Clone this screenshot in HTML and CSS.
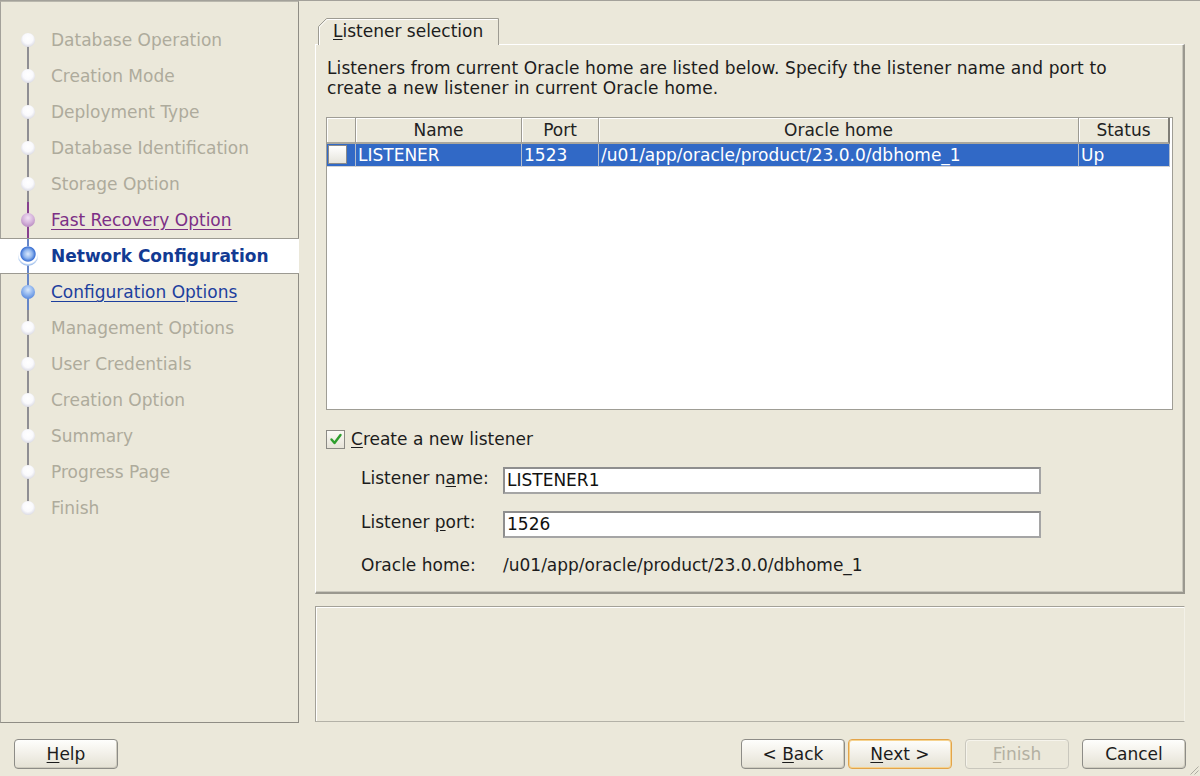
FILE: index.html
```html
<!DOCTYPE html>
<html>
<head>
<meta charset="utf-8">
<title>Network Configuration</title>
<link rel="stylesheet" href="styles.css">
</head>
<body>
<div class="window">
  <div class="main">
    <nav class="sidebar">
      <ul class="steps">
        <li class="step first line-grey disabled"><span class="dot"></span><span class="label">Database Operation</span></li>
        <li class="step line-grey disabled"><span class="dot"></span><span class="label">Creation Mode</span></li>
        <li class="step line-grey disabled"><span class="dot"></span><span class="label">Deployment Type</span></li>
        <li class="step line-grey disabled"><span class="dot"></span><span class="label">Database Identification</span></li>
        <li class="step line-grey disabled"><span class="dot"></span><span class="label">Storage Option</span></li>
        <li class="step line-purple visited"><span class="dot"></span><span class="label">Fast Recovery Option</span></li>
        <li class="step line-blue current"><span class="dot"></span><span class="label">Network Configuration</span></li>
        <li class="step line-blue next"><span class="dot"></span><span class="label">Configuration Options</span></li>
        <li class="step line-grey disabled"><span class="dot"></span><span class="label">Management Options</span></li>
        <li class="step line-grey disabled"><span class="dot"></span><span class="label">User Credentials</span></li>
        <li class="step line-grey disabled"><span class="dot"></span><span class="label">Creation Option</span></li>
        <li class="step line-grey disabled"><span class="dot"></span><span class="label">Summary</span></li>
        <li class="step line-grey disabled"><span class="dot"></span><span class="label">Progress Page</span></li>
        <li class="step last line-grey disabled"><span class="dot"></span><span class="label">Finish</span></li>
      </ul>
    </nav>
    <section class="content">
      <div class="tabs">
        <div class="tab">
          <svg class="tab-frame" width="181" height="27" viewBox="0 0 181 27">
            <path d="M0.5 27 V8.5 L8.5 0.5 H180.5 V27" fill="#ebe8da" stroke="#9d9b92" stroke-width="1"/>
            <path d="M1.5 27 V9 L9 1.5 H179.5" fill="none" stroke="#ffffff" stroke-width="1"/>
          </svg>
          <span class="tab-label"><u>L</u>istener selection</span>
        </div>
      </div>
      <div class="panel">
        <p class="desc">Listeners from current Oracle home are listed below. Specify the listener name and port to create a new listener in current Oracle home.</p>
        <div class="table">
          <div class="thead">
            <div class="th"></div>
            <div class="th">Name</div>
            <div class="th">Port</div>
            <div class="th">Oracle home</div>
            <div class="th th-last">Status</div>
          </div>
          <div class="tr selected">
            <div class="td td-check"><span class="cellbox"></span></div>
            <div class="td">LISTENER</div>
            <div class="td">1523</div>
            <div class="td">/u01/app/oracle/product/23.0.0/dbhome_1</div>
            <div class="td">Up</div>
          </div>
        </div>
        <label class="check-row">
          <span class="checkbox">
            <svg width="16" height="16" viewBox="0 0 16 16"><path d="M3.5 8.5 L6.5 12 L12.5 4" fill="none" stroke="#2e9e2e" stroke-width="2.4" stroke-linecap="round" stroke-linejoin="round"/></svg>
          </span>
          <span><u>C</u>reate a new listener</span>
        </label>
        <div class="form">
          <span class="flabel">Listener n<u>a</u>me:</span>
          <div class="input">LISTENER1</div>
          <span class="flabel">Listener <u>p</u>ort:</span>
          <div class="input">1526</div>
          <span class="flabel flabel-home">Oracle home:</span>
          <span class="fvalue">/u01/app/oracle/product/23.0.0/dbhome_1</span>
        </div>
      </div>
      <div class="messages"></div>
    </section>
  </div>
  <footer class="buttonbar">
    <button class="btn"><u>H</u>elp</button>
    <div class="nav-buttons">
      <button class="btn">&lt; <u>B</u>ack</button>
      <button class="btn btn-default"><u>N</u>ext &gt;</button>
      <button class="btn btn-disabled"><u>F</u>inish</button>
      <button class="btn">Cancel</button>
    </div>
    <svg class="grip" width="12" height="12" viewBox="0 0 12 12">
      <path d="M11.5 3.5 L3.5 11.5 M11.5 7.5 L7.5 11.5" stroke="#aeaca2" stroke-width="1"/>
    </svg>
  </footer>
</div>
</body>
</html>
```
FILE: styles.css
```css
* { box-sizing: border-box; }
html, body { margin: 0; padding: 0; }
body {
  width: 1200px;
  height: 776px;
  overflow: hidden;
  background: #ebe8da;
  font-family: "DejaVu Sans", Verdana, sans-serif;
  font-size: 17px;
  color: #1c1c1c;
}
u { text-decoration: underline; text-underline-offset: 2px; }

.window {
  width: 1200px;
  height: 776px;
  border-top: 1px solid #a3a19a;
  display: flex;
  flex-direction: column;
  position: relative;
}
.main {
  height: 722px;
  display: flex;
}

/* Sidebar */
.sidebar {
  flex: none;
  width: 299px;
  height: 722px;
  border-left: 1px solid #a3a19a;
  border-right: 1px solid #8f8d85;
  border-bottom: 1px solid #8f8d85;
  border-top: 1px solid #b9b7ad;
}
.steps {
  list-style: none;
  margin: 0;
  padding: 20px 0 0 0;
}
.step {
  position: relative;
  height: 36px;
  display: flex;
  align-items: center;
  padding-left: 21px;
  margin-left: -1px;
}
.step::before {
  content: "";
  position: absolute;
  left: 27px;
  width: 2px;
  top: 0;
  bottom: 0;
}
.step.first::before { top: 50%; }
.step.last::before { bottom: 50%; }
.line-grey::before { background: #8f8e93; }
.line-purple::before { background: #87418f; }
.line-blue::before { background: #6686c8; }
.dot {
  position: relative;
  z-index: 1;
  width: 14px;
  height: 14px;
  border-radius: 50%;
  flex: none;
}
.label { margin-left: 16px; white-space: nowrap; }
.disabled .dot {
  background: radial-gradient(circle at 50% 40%, #ffffff 0%, #fafafd 45%, #d8d8e2 80%, #b4b4c2 100%);
}
.disabled .label { color: #aeab9c; }
.visited .dot {
  background: radial-gradient(circle at 50% 35%, #f1e2f3 0%, #d6b4dc 45%, #a674b0 100%);
}
.visited .label { color: #7c2f86; text-decoration: underline; text-underline-offset: 3px; }
.next .dot {
  background: radial-gradient(circle at 50% 35%, #d8e8fc 0%, #8eb4ee 45%, #3a6fd2 100%);
}
.next .label { color: #1d3f9e; text-decoration: underline; text-underline-offset: 3px; }
.current {
  background: #ffffff;
  border-top: 1px solid #9c9a92;
  border-bottom: 1px solid #9c9a92;
  padding-left: 18px;
  margin-right: -1px;
}
.current .dot {
  width: 20px;
  height: 20px;
  background:
    radial-gradient(circle at 50% 40%, #dbe9fc 0%, #8fb5ee 28%, #3f73d4 46%, #ffffff 52%, #ffffff 60%, #a6c4ee 70%, #7fa6e2 100%);
}
.current .label {
  margin-left: 13px;
  color: #123a93;
  font-weight: bold;
}

/* Content */
.content {
  flex: 1;
  min-width: 0;
  display: flex;
  flex-direction: column;
  padding: 17px 15px 1px 16px;
}
.tabs {
  height: 26px;
  display: flex;
  position: relative;
  z-index: 2;
}
.tab {
  position: relative;
  margin-left: 3px;
  width: 181px;
  height: 27px;
  display: flex;
  align-items: center;
  padding-left: 15px;
}
.tab-frame { position: absolute; left: 0; top: 0; }
.tab-label { position: relative; white-space: nowrap; padding-bottom: 1px; }

.panel {
  height: 550px;
  border-top: 1px solid #ffffff;
  border-left: 1px solid #ffffff;
  border-right: 2px solid #9a988f;
  border-bottom: 2px solid #9a988f;
  box-shadow: inset -1px -1px 0 #c9c7bc;
  padding: 13px 10px 0 10px;
}
.desc {
  margin: 0 0 19px 1px;
  line-height: 20px;
  width: 800px;
  letter-spacing: 0.1px;
}

.table {
  width: 847px;
  height: 293px;
  border: 1px solid #9f9d95;
  background: #ffffff;
}
.thead, .tr {
  display: grid;
  grid-template-columns: 29px 166px 77px 480px 91px;
}
.th {
  height: 26px;
  background: #ebe8da;
  border-right: 1px solid #9c9a92;
  border-bottom: 2px solid #a9a79e;
  box-shadow: inset 1px 1px 0 #ffffff;
  text-align: center;
  line-height: 25px;
  color: #222;
}
.th-last { border-right: 2px solid #7f7d76; }
.tr.selected .td {
  background: #3169c6;
  color: #ffffff;
}
.td {
  height: 23px;
  line-height: 22px;
  padding-left: 2px;
  border-right: 1px solid #b1bccd;
  border-bottom: 1px solid #d3d3d3;
  white-space: nowrap;
}
.td-check { padding: 1px 0 0 1px; }
.cellbox {
  display: block;
  width: 19px;
  height: 19px;
  border: 1px solid #8a8a8a;
  background: linear-gradient(#ffffff, #e6e4dc);
}

.check-row {
  display: flex;
  align-items: center;
  margin-top: 19px;
  height: 20px;
}
.checkbox {
  width: 19px;
  height: 19px;
  border: 1px solid #8b8a85;
  background: linear-gradient(#fbfaf6, #e6e3d8);
  display: flex;
  align-items: center;
  justify-content: center;
  margin-right: 6px;
}

.form {
  margin-top: 18px;
  margin-left: 35px;
  display: grid;
  grid-template-columns: 142px 538px;
  grid-auto-rows: 27px;
  row-gap: 17px;
  align-items: center;
}
.flabel { margin-top: -5px; white-space: nowrap; }
.flabel-home, .fvalue { margin-top: -7px; }
.input {
  height: 27px;
  background: #ffffff;
  border: 2px solid #a5a5a5;
  border-top-color: #8e8e8e;
  border-left-color: #8e8e8e;
  padding-left: 2px;
  line-height: 23px;
  color: #111;
}
.fvalue { white-space: nowrap; }

.messages {
  flex: 1;
  margin-top: 12px;
  border-top: 1px solid #a3a198;
  border-left: 1px solid #a3a198;
  border-right: 1px solid #f3f1e8;
  border-bottom: 1px solid #b3b1a7;
  box-shadow: inset 1px 1px 0 #ffffff;
}

/* Buttons */
.buttonbar {
  height: 53px;
  display: flex;
  align-items: flex-start;
  padding: 16px 14px 0 14px;
  position: relative;
}
.nav-buttons {
  margin-left: auto;
  display: flex;
}
.btn {
  width: 104px;
  height: 30px;
  font-family: "DejaVu Sans", Verdana, sans-serif;
  font-size: 17px;
  color: #1c1c1c;
  border: 1px solid #8d8c87;
  border-radius: 4px;
  background: linear-gradient(#fefefc 0%, #f3f1ea 45%, #e4e1d4 100%);
  box-shadow: inset -1px -1px 0 #cfccbf;
  padding: 0;
  line-height: 26px;
}
.nav-buttons .btn + .btn { margin-left: 13px; }
.nav-buttons .btn-default { margin-left: 3px !important; border-color: #e3a44a; box-shadow: inset 0 0 0 1px #f6d38f; }
.btn-disabled {
  color: #b3b0a2;
  border-color: #c9c7bd;
  background: #ebe8da;
  box-shadow: inset 1px 1px 0 #f6f4ec;
}
.grip { position: absolute; right: 1px; bottom: 1px; }
```
